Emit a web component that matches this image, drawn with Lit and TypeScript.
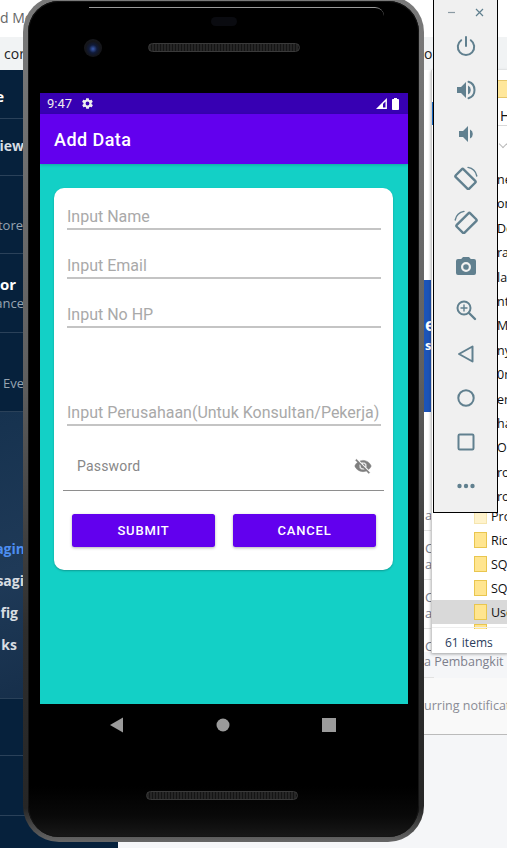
import { LitElement, html, css, svg } from 'lit'
import { customElement } from 'lit/decorators.js'

// right = distance of the clipped text's end from the right of the page
const leftRows = [
  { text: 'e', top: 87, cls: 'strong', right: 503 },
  { text: 'view', top: 137, cls: 'semi', right: 483 },
  { text: 'tore', top: 216, cls: 'dim', right: 484 },
  { text: 'or', top: 275, cls: 'strong', right: 491 },
  { text: 'ance', top: 294, cls: 'dim', right: 483 },
  { text: ', Eve', top: 374, cls: 'dim', right: 483 },
  { text: 'agin', top: 540, cls: 'blue', right: 482 },
  { text: 'sagi', top: 572, cls: 'semi', right: 483 },
  { text: 'nfig', top: 604, cls: 'semi', right: 489 },
  { text: 'ks', top: 636, cls: 'semi', right: 490 },
]

const listFragments = ['ne', 'or', 'Do', 'ra', 'la', 'nt', 'MS', 'ny', '0n', 'er', 'ha', 'O', 'ro', 'ro']
const folders = [
  { name: 'Pro', faded: true },
  { name: 'Ric' },
  { name: 'SQ' },
  { name: 'SQ' },
  { name: 'Use', selected: true },
]
const tableRows = [['', 'a'], ['C', 'a'], ['C', 'a'], ['C', '']]

const toolIcons = [
  svg`<path d="M12 3v9" /><path d="M7.2 6.2a8.2 8.2 0 1 0 9.6 0" />`,
  svg`<path class="fill" d="M3 9h4l5-5v16l-5-5H3z" /><path class="fill" d="M14 7.5a5 5 0 0 1 0 9z" /><path d="M14.5 3.8a8.6 8.6 0 0 1 0 16.4" />`,
  svg`<path class="fill" d="M5 9h4l5-5v16l-5-5H5z" /><path class="fill" d="M16 7.5a5 5 0 0 1 0 9z" />`,
  svg`<rect stroke-width="2.4" x="2" y="7.5" width="19" height="11" rx="1.3" transform="rotate(45 11.5 13)" /><path stroke-width="1.4" d="M14 1.4a11 11 0 0 1 8.8 8.6" />`,
  svg`<rect stroke-width="2.4" x="3" y="7.5" width="19" height="11" rx="1.3" transform="rotate(-45 12.5 13)" /><path stroke-width="1.4" d="M10 1.4a11 11 0 0 0-8.8 8.6" />`,
  svg`<path class="fill" fill-rule="evenodd" d="M9 3L7.2 5H4a2 2 0 0 0-2 2v12a2 2 0 0 0 2 2h16a2 2 0 0 0 2-2V7a2 2 0 0 0-2-2h-3.2L15 3zM12 8a5 5 0 1 1 0 10 5 5 0 0 1 0-10zm0 2.2a2.8 2.8 0 1 0 0 5.6 2.8 2.8 0 0 0 0-5.6z" />`,
  svg`<circle cx="10" cy="10" r="6.5" /><path stroke-width="2.4" d="M15 15l6 6" /><path stroke-width="1.4" d="M10 7v6M7 10h6" />`,
  svg`<path d="M18.5 4.5v15L5 12z" />`,
  svg`<circle cx="12" cy="12" r="7.7" />`,
  svg`<rect x="4.5" y="4.5" width="15" height="15" rx="1.2" />`,
  svg`<circle class="fill" cx="5.5" cy="12" r="2.2" /><circle class="fill" cx="12" cy="12" r="2.2" /><circle class="fill" cx="18.5" cy="12" r="2.2" />`,
]

@customElement('app-root')
export class AppRoot extends LitElement {
  static styles = css`
    :host {
      display: block;
      position: relative;
      width: 507px;
      height: 848px;
      overflow: hidden;
      background: #f5f6f8;
      font-family: Roboto, "Liberation Sans", sans-serif;
    }
    /* desktop windows behind the emulator */
    .browser-top {
      position: absolute;
      left: 0;
      top: 0;
      width: 507px;
      height: 37px;
      background: #fff;
      font: 14px "Open Sans", sans-serif;
      color: #666;
    }
    .browser-top span {
      position: absolute;
      left: 0;
      top: 8px;
    }
    .address {
      position: absolute;
      left: 0;
      top: 37px;
      width: 507px;
      height: 33px;
      background: #f1f3f4;
      font: 14px "Open Sans", sans-serif;
      color: #222;
    }
    .address span {
      position: absolute;
      top: 7px;
    }
    .page {
      position: absolute;
      left: 424px;
      top: 70px;
      width: 10px;
      height: 582px;
      background: #fff;
    }
    .table-rows {
      position: absolute;
      left: 424px;
      top: 482px;
      width: 10px;
      display: flex;
      flex-direction: column;
      font: 13px/16px "Open Sans", sans-serif;
      color: #777c8c;
    }
    .table-row {
      height: 49px;
      box-sizing: border-box;
      padding: 9px 0 0 1px;
      display: flex;
      flex-direction: column;
      border-bottom: 1px solid #e2e2e2;
    }
    .table-row span { height: 16px; }
    .sidebar {
      position: absolute;
      left: 0;
      top: 70px;
      width: 118px;
      height: 778px;
      background: #06213c;
    }
    .sidebar .glow {
      position: absolute;
      left: 0;
      right: 0;
      top: 341px;
      height: 287px;
      background: linear-gradient(160deg, #16324f, #1f3a58 50%, #142c47);
    }
    .sidebar hr {
      position: absolute;
      left: 0;
      right: 0;
      margin: 0;
      border: 0;
      height: 1px;
      background: #2a4159;
    }
    .side-text {
      position: absolute;
      font: 14px/18px "Open Sans", sans-serif;
      white-space: nowrap;
    }
    .side-text.strong { color: #fff; font-weight: 700; font-size: 15px; }
    .side-text.semi { color: #d8dde2; font-weight: 700; }
    .side-text.dim { color: #97a4b1; font-size: 13px; }
    .side-text.blue { color: #4d8ef0; font-weight: 700; }
    .banner {
      position: absolute;
      left: 424px;
      top: 280px;
      width: 10px;
      height: 132px;
      background: #1c54b8;
      color: #fff;
      font: 700 17px "Open Sans", sans-serif;
      overflow: hidden;
    }
    .banner span { position: absolute; left: 1px; }
    .page-text {
      position: absolute;
      left: 424px;
      top: 653px;
      font: 12.5px "Open Sans", sans-serif;
      color: #7d7f8c;
      white-space: nowrap;
    }
    .notice {
      position: absolute;
      left: 424px;
      top: 678px;
      width: 83px;
      height: 56px;
      background: #f9f9f9;
      border-bottom: 1px solid #bbb;
      font: 12.5px "Open Sans", sans-serif;
      color: #8a8c96;
      white-space: nowrap;
      overflow: hidden;
    }
    .notice span { position: absolute; left: 0; top: 19px; }
    .explorer {
      position: absolute;
      left: 431px;
      top: 70px;
      width: 76px;
      height: 583px;
      background: #fff;
      border-left: 1px solid #ccc;
      box-shadow: 0 1px 3px rgba(0, 0, 0, .35);
      overflow: hidden;
      font: 12.5px "Open Sans", sans-serif;
      color: #111;
    }
    .tab-edge {
      position: absolute;
      left: 0;
      top: 32px;
      width: 3px;
      height: 23px;
      background: #1565c0;
    }
    .ribbon {
      position: absolute;
      left: 66px;
      top: 10px;
      width: 12px;
      height: 16px;
      background: #ffe79b;
      border-top: 1px solid #e6c66a;
      border-bottom: 1px solid #e6c66a;
    }
    .home {
      position: absolute;
      left: 68px;
      top: 36px;
      font-size: 14px;
    }
    .rule {
      position: absolute;
      left: 66px;
      top: 55px;
      right: 0;
      height: 1px;
      background: #d8d8d8;
    }
    .chev {
      position: absolute;
      left: 68px;
      top: 71px;
      width: 5px;
      height: 5px;
      border-right: 1px solid #bbb;
      border-bottom: 1px solid #bbb;
      transform: rotate(45deg);
    }
    .fragments {
      position: absolute;
      left: 65px;
      top: 98px;
      display: flex;
      flex-direction: column;
      white-space: nowrap;
    }
    .fragments span {
      height: 24.4px;
      line-height: 24px;
    }
    .folders {
      position: absolute;
      left: 0;
      right: 0;
      top: 434px;
      display: flex;
      flex-direction: column;
    }
    .folder-row {
      height: 24px;
      display: flex;
      align-items: center;
      gap: 4px;
      padding-left: 42px;
    }
    .folder-row.selected { background: #d9d9d9; }
    .folder-row.faded .folder { opacity: .45; }
    .folder-row.cut { height: 5px; align-items: flex-start; overflow: hidden; }
    .folder {
      flex: none;
      width: 11px;
      height: 14px;
      background: #ffe58f;
      border: 1px solid #e9c64f;
    }
    .items {
      position: absolute;
      left: 13px;
      bottom: 2px;
      font: 12px "Open Sans", sans-serif;
      color: #2a3c5c;
      line-height: 17px;
    }
    .items-top {
      position: absolute;
      left: 0;
      right: 0;
      bottom: 25px;
      height: 1px;
      background: #eee;
    }
    /* phone */
    .phone {
      position: absolute;
      left: 23px;
      top: -4px;
      width: 401px;
      height: 846px;
      box-sizing: border-box;
      padding: 5px;
      border-radius: 36px;
      background: linear-gradient(180deg, #7a7a7a 0, #5f5f5f 45%, #2e2e2e 75%, #262626 96%, #666 100%);
    }
    .body {
      height: 100%;
      box-sizing: border-box;
      padding: 0 11px 0 12px;
      display: flex;
      flex-direction: column;
      border-radius: 31px;
      background: linear-gradient(180deg, #000 0, #000 785px, #090909 815px, #181818 100%);
      box-shadow: inset 0 0 0 1px #141414;
    }
    .bezel-top {
      flex: none;
      height: 92px;
      position: relative;
    }
    .highlight {
      position: absolute;
      left: 49px;
      right: 24px;
      top: 6px;
      height: 8px;
      border-top: 1px solid #9a9a9a;
      border-radius: 0 30px 0 0;
    }
    .sensor {
      position: absolute;
      left: 171px;
      top: 16px;
      width: 26px;
      height: 9px;
      border-radius: 5px;
      background: #0a0b10;
    }
    .camera {
      position: absolute;
      left: 44px;
      top: 38px;
      width: 18px;
      height: 18px;
      border-radius: 50%;
      background: radial-gradient(circle at 50% 55%, #3a5bb0 0, #101a38 30%, #14151a 55%, #1c1d20 100%);
    }
    .speaker {
      flex: none;
      height: 9px;
      width: 152px;
      box-sizing: border-box;
      border: 1px solid #3a3a3a;
      border-radius: 5px;
      background: repeating-linear-gradient(90deg, #262626 0 2px, #141414 2px 3px);
    }
    .bezel-top .speaker {
      position: absolute;
      left: 108px;
      top: 42px;
    }
    .screen {
      flex: none;
      height: 611px;
      display: flex;
      flex-direction: column;
      background: #13d0c6;
    }
    .status {
      flex: none;
      height: 21px;
      box-sizing: border-box;
      padding: 0 9px 0 7px;
      display: flex;
      align-items: center;
      gap: 9px;
      background: #3700b3;
      color: #eee;
      font-size: 13px;
    }
    .status .spacer { flex: 1; }
    .status .glyphs { display: flex; align-items: center; gap: 5px; }
    .appbar {
      flex: none;
      height: 50px;
      box-sizing: border-box;
      padding-left: 14px;
      display: flex;
      align-items: center;
      background: #6200ee;
      color: #fff;
      font-size: 18px;
      font-weight: 500;
      letter-spacing: .45px;
      box-shadow: 0 1px 3px rgba(0, 0, 0, .2);
    }
    .card {
      margin: 24px 15px 0 14px;
      padding: 14px 9px 23px;
      display: flex;
      flex-direction: column;
      background: #fff;
      border-radius: 10px;
      box-shadow: 0 1px 2px rgba(0, 0, 0, .25);
    }
    .fields {
      display: flex;
      flex-direction: column;
      gap: 21px;
      padding: 0 3px 0 4px;
    }
    .field {
      height: 28px;
      box-sizing: border-box;
      border-bottom: 2px solid #c4c4c4;
      color: #a9a9a9;
      font-size: 16px;
      line-height: 30px;
      white-space: nowrap;
    }
    .gap-field {
      height: 28px;
    }
    .password {
      margin-top: 9px;
      height: 56px;
      box-sizing: border-box;
      padding: 6px 12px 0 14px;
      display: flex;
      align-items: center;
      justify-content: space-between;
      border-bottom: 1px solid #8e8e8e;
      color: #878787;
      font-size: 14px;
      letter-spacing: .2px;
    }
    .eye {
      stroke: #7f7f7f;
      stroke-width: .6;
    }
    .buttons {
      margin-top: 23px;
      padding: 0 8px 0 9px;
      display: flex;
      gap: 18px;
    }
    .btn {
      flex: 1;
      height: 33px;
      display: flex;
      align-items: center;
      justify-content: center;
      background: #6200ee;
      border-radius: 2.5px;
      box-shadow: 0 1px 3px rgba(0, 0, 0, .3);
      color: #fff;
      font-size: 13px;
      font-weight: 500;
      letter-spacing: .8px;
    }
    .nav {
      flex: none;
      height: 42px;
      display: flex;
      align-items: center;
      justify-content: space-between;
      padding: 0 72px 0 70px;
    }
    .bezel-bottom {
      flex: 1;
      display: flex;
      justify-content: center;
      padding: 45px 4px 0 0;
    }
    /* emulator toolbar */
    .toolbar {
      position: absolute;
      left: 433px;
      top: -1px;
      width: 65px;
      height: 514px;
      box-sizing: border-box;
      border: 1px solid #000;
      background: #f0f0f0;
      display: flex;
      flex-direction: column;
      align-items: center;
    }
    .win-btns {
      flex: none;
      align-self: stretch;
      height: 25px;
      padding: 0 13px;
      display: flex;
      align-items: center;
      justify-content: space-between;
      margin-bottom: 9px;
    }
    .tools {
      display: flex;
      flex-direction: column;
      gap: 20px;
    }
    .tools svg {
      display: block;
      width: 24px;
      height: 24px;
      fill: none;
      stroke: #61808f;
      stroke-width: 2;
      stroke-linejoin: round;
      stroke-linecap: round;
    }
    .tools svg .fill {
      fill: #61808f;
      stroke: none;
    }
  `

  render() {
    return html`
      <div class="browser-top"><span>d Mes</span></div>
      <div class="address"><span style="left:4px">cor</span><span style="left:424px">o</span></div>
      <div class="page"></div>
      <div class="table-rows">
        ${tableRows.map((r) => html`<div class="table-row">${r.map((t) => html`<span>${t}</span>`)}</div>`)}
      </div>
      <div class="sidebar">
        <div class="glow"></div>
        ${[48, 105, 183, 262, 341, 628, 685, 745].map((t) => html`<hr style="top:${t}px" />`)}
      </div>
      ${leftRows.map(
        (r) => html`<div class="side-text ${r.cls}" style="top:${r.top}px;right:${r.right}px">${r.text}</div>`,
      )}
      <div class="banner"><span style="top:33px">e</span><span style="top:56px;font-size:13px">s</span></div>
      <div class="page-text">a Pembangkit</div>
      <div class="notice"><span>urring notification</span></div>
      <div class="explorer">
        <div class="tab-edge"></div>
        <div class="ribbon"></div>
        <div class="home">H</div>
        <div class="rule"></div>
        <div class="chev"></div>
        <div class="fragments">${listFragments.map((f) => html`<span>${f}</span>`)}</div>
        <div class="folders">
          ${folders.map(
            (f) => html`<div class="folder-row ${f.selected ? 'selected' : ''} ${f.faded ? 'faded' : ''}">
              <div class="folder"></div><span>${f.name}</span>
            </div>`,
          )}
          <div class="folder-row cut"><div class="folder"></div></div>
        </div>
        <div class="items-top"></div>
        <div class="items">61 items</div>
      </div>

      <div class="phone">
        <div class="body">
          <div class="bezel-top">
            <div class="highlight"></div>
            <div class="sensor"></div>
            <div class="camera"></div>
            <div class="speaker"></div>
          </div>
          <div class="screen">
            <div class="status">
              <span>9:47</span>
              <svg width="13" height="13" viewBox="0 0 24 24" fill="#eee">
                <path d="M19.4 13a7.5 7.5 0 0 0 0-2l2.1-1.6a.5.5 0 0 0 .1-.6l-2-3.5a.5.5 0 0 0-.6-.2l-2.5 1a7.3 7.3 0 0 0-1.7-1l-.4-2.6a.5.5 0 0 0-.5-.4h-4a.5.5 0 0 0-.5.4l-.4 2.6a7.3 7.3 0 0 0-1.7 1l-2.5-1a.5.5 0 0 0-.6.2l-2 3.5a.5.5 0 0 0 .1.6L4.6 11a7.5 7.5 0 0 0 0 2l-2.1 1.6a.5.5 0 0 0-.1.6l2 3.5c.1.2.4.3.6.2l2.5-1c.5.4 1.1.7 1.7 1l.4 2.6c0 .2.2.4.5.4h4c.3 0 .5-.2.5-.4l.4-2.6c.6-.3 1.2-.6 1.7-1l2.5 1c.2.1.5 0 .6-.2l2-3.5a.5.5 0 0 0-.1-.6zM12 15.5a3.5 3.5 0 1 1 0-7 3.5 3.5 0 0 1 0 7z" />
              </svg>
              <span class="spacer"></span>
              <span class="glyphs">
                <svg width="11" height="11" viewBox="0 0 11 11"><path fill="none" stroke="#fff" stroke-width="1.4" d="M1.7 10.2L10.2 1.7v8.5z" /><path fill="#fff" d="M1 10.9L7 5v5.9z" /></svg>
                <svg width="7" height="12" viewBox="0 0 7 12"><path fill="#fff" d="M2 0h3v1h1.2c.4 0 .8.4.8.8v9.4c0 .4-.4.8-.8.8H.8c-.4 0-.8-.4-.8-.8V1.8c0-.4.4-.8.8-.8H2z" /></svg>
              </span>
            </div>
            <div class="appbar">Add Data</div>
            <div class="card">
              <div class="fields">
                <div class="field">Input Name</div>
                <div class="field">Input Email</div>
                <div class="field">Input No HP</div>
                <div class="gap-field"></div>
                <div class="field">Input Perusahaan(Untuk Konsultan/Pekerja)</div>
              </div>
              <div class="password">
                <span>Password</span>
                <svg class="eye" width="18" height="18" viewBox="0 0 24 24" fill="#7f7f7f">
                  <path d="M12 7a5 5 0 0 1 5 5c0 .6-.1 1.3-.4 1.8l2.9 2.9A11.8 11.8 0 0 0 23 12c-1.7-4.4-6-7.5-11-7.5-1.4 0-2.7.3-4 .7l2.2 2.2C10.7 7.1 11.4 7 12 7zM2 4.3l2.3 2.3.4.4A11.8 11.8 0 0 0 1 12c1.7 4.4 6 7.5 11 7.5 1.6 0 3-.3 4.4-.8l.4.4 2.9 2.9 1.3-1.3L3.3 3zM7.5 9.8l1.6 1.5c0 .2-.1.5-.1.7a3 3 0 0 0 3 3c.2 0 .5 0 .7-.1l1.5 1.6c-.7.3-1.4.5-2.2.5a5 5 0 0 1-5-5c0-.8.2-1.5.5-2.2zm4.3-.8l3.2 3.2V12a3 3 0 0 0-3-3z" />
                </svg>
              </div>
              <div class="buttons">
                <div class="btn">SUBMIT</div>
                <div class="btn">CANCEL</div>
              </div>
            </div>
          </div>
          <div class="nav">
            <svg width="14" height="16" viewBox="0 0 14 16"><path fill="#9b9b9b" d="M13 .5v15L0 8z" /></svg>
            <svg width="14" height="14" viewBox="0 0 14 14"><circle cx="7" cy="7" r="6.5" fill="#9b9b9b" /></svg>
            <svg width="14" height="14" viewBox="0 0 14 14"><rect width="14" height="14" fill="#9b9b9b" /></svg>
          </div>
          <div class="bezel-bottom"><div class="speaker"></div></div>
        </div>
      </div>

      <div class="toolbar">
        <div class="win-btns">
          <svg width="9" height="9" viewBox="0 0 9 9"><path stroke="#8a9aa3" stroke-width="1.2" d="M1 4.5h7" /></svg>
          <svg width="9" height="9" viewBox="0 0 9 9"><path stroke="#5f7f8e" stroke-width="1.2" d="M1 1l7 7M8 1L1 8" /></svg>
        </div>
        <div class="tools">
          ${toolIcons.map((icon) => html`<svg viewBox="0 0 24 24">${icon}</svg>`)}
        </div>
      </div>
    `
  }
}
